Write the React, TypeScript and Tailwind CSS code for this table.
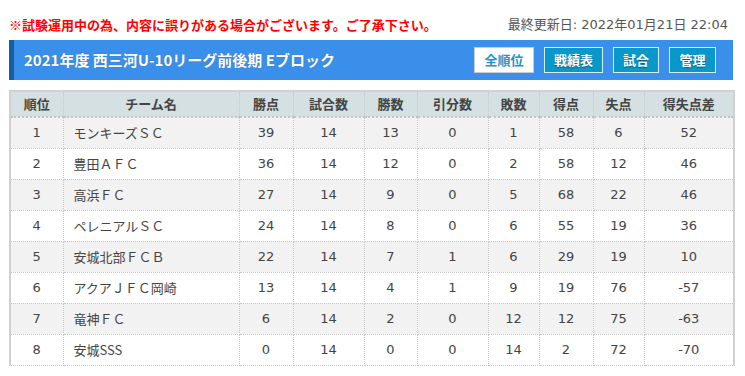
import React from 'react'

const rows = [
  ['1', 'モンキーズＳＣ', 39, 14, 13, 0, 1, 58, 6, 52],
  ['2', '豊田ＡＦＣ', 36, 14, 12, 0, 2, 58, 12, 46],
  ['3', '高浜ＦＣ', 27, 14, 9, 0, 5, 68, 22, 46],
  ['4', 'ペレニアルＳＣ', 24, 14, 8, 0, 6, 55, 19, 36],
  ['5', '安城北部ＦＣＢ', 22, 14, 7, 1, 6, 29, 19, 10],
  ['6', 'アクアＪＦＣ岡崎', 13, 14, 4, 1, 9, 19, 76, -57],
  ['7', '竜神ＦＣ', 6, 14, 2, 0, 12, 12, 75, -63],
  ['8', '安城SSS', 0, 14, 0, 0, 14, 2, 72, -70],
]

const heads = ['順位', 'チーム名', '勝点', '試合数', '勝数', '引分数', '敗数', '得点', '失点', '得失点差']
const widths = ['w-[53px]', 'w-[176px]', 'w-[54px]', 'w-[71px]', 'w-[53px]', 'w-[71px]', 'w-[51px]', 'w-[54px]', 'w-[51px]', 'w-[90px]']

const jp = { fontFamily: '"Noto Sans CJK JP", sans-serif' }
const num = { fontFamily: '"DejaVu Sans", "Noto Sans CJK JP", sans-serif' }

export default function App() {
  return (
    <div className="w-[745px] h-[376px] bg-white pt-[16px]" style={jp}>
      <div className="ml-[9px] w-[724px] flex items-center justify-between h-[18px]">
        <span className="text-[13px] font-bold text-[#ff0000]">
          ※試験運用中の為、内容に誤りがある場合がございます。ご了承下さい。
        </span>
        <span className="text-[13px] text-[#555] mr-[5px]" style={num}>最終更新日: 2022年01月21日 22:04</span>
      </div>

      <div className="ml-[9px] mt-[6px] w-[724px] h-[40px] bg-[#3a8fea] border-l-[5px] border-[#155ea6] flex items-center justify-between pl-[10px] pr-[17px]">
        <h1 className="text-[15px] font-bold text-white [text-shadow:0_0_1px_rgba(0,0,0,0.3)]">
          2021年度 西三河U-10リーグ前後期 Eブロック
        </h1>
        <div className="flex gap-[10px]">
          <button className="h-[26px] w-[60px] bg-white border border-[#ccc] text-[13px] font-bold text-[#1b95cf]">全順位</button>
          <button className="h-[26px] w-[59px] bg-[#0898c9] border border-[#d8eef7] text-[13px] font-bold text-white [text-shadow:0_1px_1px_rgba(0,0,0,0.4)]">戦績表</button>
          <button className="h-[26px] w-[46px] bg-[#0898c9] border border-[#d8eef7] text-[13px] font-bold text-white [text-shadow:0_1px_1px_rgba(0,0,0,0.4)]">試合</button>
          <button className="h-[26px] w-[47px] bg-[#0898c9] border border-[#d8eef7] text-[13px] font-bold text-white [text-shadow:0_1px_1px_rgba(0,0,0,0.4)]">管理</button>
        </div>
      </div>

      <table className="ml-[9px] mt-[10px] w-[724px] border-collapse table-fixed border-l-2 border-r-2 border-t-2 border-[#d0d0d0]">
        <thead>
          <tr className="h-[26px] bg-[#d4e0e1]">
            {heads.map((h, i) => (
              <th
                key={h}
                className={`${widths[i]} text-[13px] font-bold text-[#444] border-b-2 border-b-[#c4c4c4] border-r border-r-[#c8c8c8] border-dotted last:border-r-0`}
              >
                {h}
              </th>
            ))}
          </tr>
        </thead>
        <tbody>
          {rows.map((r, ri) => (
            <tr key={ri} className={`h-[31px] ${ri % 2 === 0 ? 'bg-[#f2f2f2]' : 'bg-white'}`}>
              {r.map((c, ci) => (
                <td
                  key={ci}
                  style={ci === 1 ? jp : num}
                  className={`text-[13px] leading-[18px] text-[#444] border-b border-r border-dotted border-[#c8c8c8] last:border-r-0 ${
                    ci === 1 ? 'text-left pl-[10px]' : 'text-center'
                  }`}
                >
                  {c}
                </td>
              ))}
            </tr>
          ))}
        </tbody>
      </table>
    </div>
  )
}
